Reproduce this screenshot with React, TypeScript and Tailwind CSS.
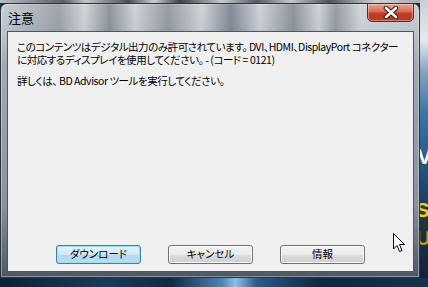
import React from "react";

const jp = "font-['Noto_Sans_CJK_JP','Noto_Sans',sans-serif] [font-feature-settings:'palt']";

function CloseButton() {
  return (
    <div className="absolute -top-px right-[5px] w-[47px] h-[19px] rounded-b-[5px] border border-[#5a2a22] bg-[linear-gradient(#e9a898_0%,#d66a55_45%,#c23d24_55%,#b83a22_100%)] shadow-[inset_0_0_0_1px_rgba(255,220,210,0.45)] flex items-center justify-center">
      <svg width="16" height="13" viewBox="0 0 16 13">
        <path d="M3 2 L13 11 M13 2 L3 11" stroke="#3b1a14" strokeWidth="4.6" strokeLinecap="round" />
        <path d="M3 2 L13 11 M13 2 L3 11" stroke="#ffffff" strokeWidth="2.6" strokeLinecap="round" />
      </svg>
    </div>
  );
}

function DialogButton({ label, primary }: { label: string; primary?: boolean }) {
  return (
    <button
      className={
        primary
          ? "w-[85px] h-[19px] rounded-[3px] border border-[#3c7fb1] bg-[linear-gradient(#e5f4fc_0%,#cde9f7_50%,#aed8ee_52%,#b9deef_100%)] shadow-[inset_0_0_0_1px_#9ee0f7] text-[10.5px] leading-none text-black flex items-center justify-center"
          : "w-[85px] h-[19px] rounded-[3px] border border-[#707070] bg-[linear-gradient(#f2f2f2_0%,#ebebeb_50%,#dddddd_52%,#cfcfcf_100%)] shadow-[inset_0_0_0_1px_#fcfcfc] text-[10.5px] leading-none text-black flex items-center justify-center"
      }
    >
      <span className={jp}>{label}</span>
    </button>
  );
}

function Cursor() {
  return (
    <svg className="absolute left-[393px] top-[233px]" width="13" height="20" viewBox="0 0 13 20">
      <path d="M0.5 0.5 L0.5 16 L4 12.5 L6.5 18.5 L9 17.5 L6.5 11.5 L11.5 11.5 Z" fill="#ffffff" stroke="#000000" strokeWidth="1" strokeLinejoin="round" />
    </svg>
  );
}

export default function App() {
  return (
    <div className="w-[428px] h-[287px] overflow-hidden relative bg-[#12304c] flex flex-col">
      <div className="h-[3px] bg-[linear-gradient(90deg,#b8bec4_0%,#5a6068_15%,#c0c6cc_20%,#4a5058_30%,#c8ced4_36%,#3c434a_42%,#c4cad0_52%,#555c63_60%,#c2c8ce_68%,#4d545b_77%,#cfd4d9_88%,#9aa3ab_100%)]" />
      <div className="flex">
        <div className="w-[420px] h-[275px] relative rounded-t-[7px] border border-[#2c343c] bg-[linear-gradient(#c9cfd5_0px,#bcc4cb_28px,#a2abb3_60px,#8a939b_200px,#4b5661_275px)] shadow-[inset_0_0_0_1px_rgba(255,255,255,0.35)] flex flex-col">
          <div className="h-[27px] rounded-t-[6px] bg-[linear-gradient(90deg,rgba(255,255,255,0)_0%,rgba(40,46,54,0.25)_14%,rgba(255,255,255,0.15)_20%,rgba(40,46,54,0.35)_26%,rgba(255,255,255,0.1)_32%,rgba(40,46,54,0.3)_40%,rgba(255,255,255,0.12)_48%,rgba(30,40,60,0.4)_55%,rgba(255,255,255,0.1)_62%,rgba(40,46,54,0.35)_70%,rgba(255,255,255,0.1)_76%,rgba(40,46,54,0.3)_80%,rgba(255,255,255,0.15)_86%,rgba(255,255,255,0)_100%)] flex items-center pl-[7px]">
            <span className={`${jp} text-[13px] text-black leading-none`}>注意</span>
          </div>
          <CloseButton />
          <div className="flex-1 ml-[6px] mr-[5px] mb-[5px] border border-[#4c5660] bg-[#f0f0f0] flex flex-col">
            <div className={`${jp} pl-[9px] pt-[8px] text-[10.5px] leading-[13px] tracking-[-0.45px] text-black whitespace-nowrap`}>
              <p>このコンテンツはデジタル出力のみ許可されています。 DVI、HDMI、DisplayPort コネクター</p>
              <p>に対応するディスプレイを使用してください。 - (コード = 0121)</p>
              <p className="mt-[8px]">詳しくは、 BD Advisor ツールを実行してください。</p>
            </div>
            <div className="mt-auto mb-[7px] pl-[48px] flex gap-[27px]">
              <DialogButton label="ダウンロード" primary />
              <DialogButton label="キャンセル" />
              <DialogButton label="情報" />
            </div>
          </div>
        </div>
        <div className="w-[8px] h-[278px] -mt-[3px] bg-[linear-gradient(#c8ced4_0px,#e6eaee_40px,#8aa6c0_70px,#3f78a8_110px,#2a5f8e_150px,#1b3f63_200px,#2c3a2a_210px,#1a2c44_240px,#0e2238_278px)] flex flex-col items-start overflow-hidden">
          <span className="mt-[146px] text-[22px] leading-none font-bold text-white font-['Liberation_Sans',sans-serif] -ml-[3px]">V</span>
          <span className="mt-[32px] text-[20px] leading-none font-bold text-[#e8d020] font-['Liberation_Sans',sans-serif] -ml-[4px]">S</span>
          <span className="mt-[8px] text-[20px] leading-none font-bold text-[#b89a18] font-['Liberation_Sans',sans-serif] -ml-[4px]">U</span>
        </div>
      </div>
      <div className="flex-1 bg-[linear-gradient(90deg,#0d2138_0%,#1a3a5a_25%,#0f2a45_40%,#4f86b6_52%,#8fc0e6_55%,#2a5a86_60%,#0f2740_75%,#16324e_100%)]" />
      <Cursor />
    </div>
  );
}
